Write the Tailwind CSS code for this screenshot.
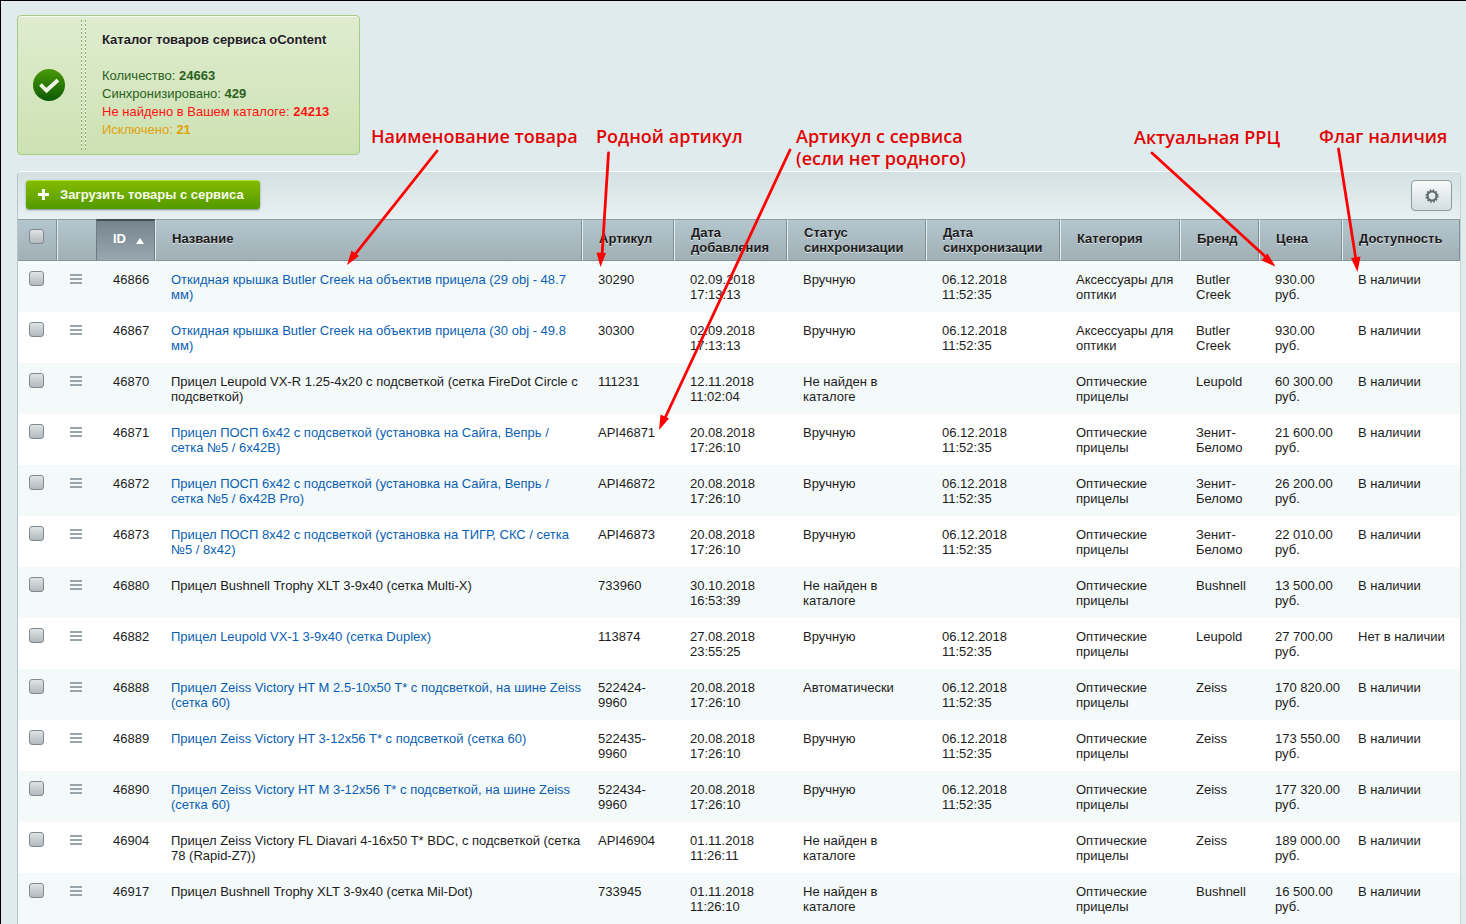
<!DOCTYPE html>
<html lang="ru">
<head>
<meta charset="utf-8">
<title>Каталог товаров сервиса oContent</title>
<script src="https://cdn.jsdelivr.net/npm/@tailwindcss/browser@4"></script>
</head>
<body class="relative min-h-screen overflow-x-hidden border-t border-l border-black bg-[#e0ebed] pt-[14px] pr-[5px] pl-4 font-['Liberation_Sans',Arial,sans-serif] text-[13px] leading-[15px] text-[#1c1c1c]">

<section class="flex w-fit rounded-[4px] border border-[#a5cb84] bg-linear-to-b from-[#dfecd0] to-[#cde2b2] shadow-[inset_0_1px_0_#f7fbf0]">
  <div class="flex w-[63px] items-center justify-center pr-[2px]">
    <svg class="size-8" viewBox="0 0 32 32" aria-hidden="true">
      <defs><linearGradient id="ok" x1="0" y1="0" x2="0" y2="1"><stop offset="0" stop-color="#4a9a06"/><stop offset="1" stop-color="#0c5a05"/></linearGradient></defs>
      <circle cx="16" cy="16" r="16" fill="url(#ok)"/>
      <path d="M7.500 15.500l6 6L25 11" fill="none" stroke="#f0f7e8" stroke-width="3.800"/>
    </svg>
  </div>
  <div class="my-1 flex w-[5px] justify-between">
    <span class="w-px bg-[repeating-linear-gradient(to_bottom,#8fb077_0_2px,#f0f7e6_2px_4px)]"></span>
    <span class="w-px bg-[repeating-linear-gradient(to_bottom,#8fb077_0_2px,#f0f7e6_2px_4px)]"></span>
  </div>
  <div class="py-[15px] pr-[30px] pl-4 leading-[18px] text-[#2a6120]">
    <h1 class="mb-[18px] font-bold text-[#1c1c1c] [text-shadow:0_1px_0_#ffffffb0]">Каталог товаров сервиса oContent</h1>
    <p>Количество: <b>24663</b></p>
    <p>Синхронизировано: <b>429</b></p>
    <p class="text-[#ff1212]">Не найдено в Вашем каталоге: <b>24213</b></p>
    <p class="text-[#e0a10c]">Исключено: <b>21</b></p>
  </div>
</section>

<main class="mt-4 rounded-t-[5px] border-x border-t border-l-[#b9c6c9] border-r-[#c5d0d3] border-t-white">
  <div class="flex h-[47px] items-start justify-between rounded-t-[4px] bg-linear-to-b from-[#d4e1e2] to-[#e8f0f2] px-2 pt-2">
    <button type="button" class="flex h-[29px] items-center gap-[11px] rounded-[3px] border-t border-t-[#b2de3c] bg-linear-to-b from-[#84bb00] to-[#519a00] pr-4 pb-[2px] pl-3 font-bold text-[#f7fbea] shadow-[0_1px_2px_#00000070]">
      <svg class="size-[11px]" viewBox="0 0 11 11" aria-hidden="true"><path d="M5.500 0v11M0 5.500h11" stroke="#fff" stroke-width="3"/></svg>
      Загрузить товары с сервиса
    </button>
    <button type="button" aria-label="Настройки" class="flex h-[31px] w-[41px] items-center justify-center rounded-[4px] border border-[#8a9a9e] bg-linear-to-b from-[#f9fbfb] to-[#d3dde0]">
      <svg class="size-[14px]" viewBox="0 0 14 14" aria-hidden="true" fill="none" stroke="#5d6b71"><circle cx="7" cy="7" r="4.500" stroke-width="2.200"/><circle cx="7" cy="7" r="6" stroke-width="1.400" stroke-dasharray="1.650 1.492"/></svg>
    </button>
  </div>

  <table class="w-full table-fixed border-separate border-spacing-0 text-left">
    <colgroup>
      <col class="w-[39px]"><col class="w-[39px]"><col class="w-[59px]"><col><col class="w-[92px]"><col class="w-[113px]"><col class="w-[139px]"><col class="w-[134px]"><col class="w-[120px]"><col class="w-[79px]"><col class="w-[83px]"><col class="w-[118px]">
    </colgroup>
    <thead>
      <tr id="head" class="h-[42px] bg-linear-to-b from-[#b4c7ce] to-[#a0b0b4]"></tr>
    </thead>
    <tbody id="rows"></tbody>
  </table>
</main>

<div class="pointer-events-none absolute inset-0 font-['Open_Sans',sans-serif] text-[18px] leading-[22px] font-semibold whitespace-nowrap text-[#e00505]">
  <svg class="absolute top-0 left-0 h-[440px] w-[1465px]" viewBox="1 1 1465 440" aria-hidden="true" stroke="#f00" fill="#f00">
    <g stroke-width="2.800" stroke-linecap="round">
      <path d="M437 151L353 257M608.500 153L602 256M790 150L665 418M1152 153L1268 259M1338.500 149L1356 260"/>
    </g>
    <g stroke="none">
      <path d="M347 265l4.500-14.500 7.500 5.500z"/>
      <path d="M600.500 267l-4-14.500 9.500.500z"/>
      <path d="M659 430l1.500-15.500 8.500 4z"/>
      <path d="M1275.500 266.500l-14-6 6-7z"/>
      <path d="M1357.500 272l-6.500-14 9.500-1.500z"/>
    </g>
  </svg>
  <span class="absolute top-[124px] left-[370px]">Наименование товара</span>
  <span class="absolute top-[124px] left-[595px]">Родной артикул</span>
  <span class="absolute top-[124px] left-[795px]">Артикул с сервиса<br>(если нет родного)</span>
  <span class="absolute top-[125px] left-[1133px]">Актуальная РРЦ</span>
  <span class="absolute top-[124px] left-[1318px]">Флаг наличия</span>
</div>

<script>
const box = label => `<input type="checkbox" aria-label="${label}" class="block size-[15px] appearance-none rounded-[3px] border border-[#7f8a8e] bg-linear-to-b from-[#dfe3e5] to-[#b3babd] checked:from-[#8fa3aa]">`;
const heads = ['Название', 'Артикул', 'Дата<br>добавления', 'Статус<br>синхронизации', 'Дата<br>синхронизации', 'Категория', 'Бренд', 'Цена', 'Доступность'];
const th = 'border-t border-b border-r border-l border-t-[#8b9ca2] border-b-[#82959a] border-r-[#7f9197] border-l-[#e3edef] pl-4 font-bold [text-shadow:0_1px_0_#ffffffa0]';
document.getElementById('head').innerHTML =
  `<th class="border-t border-b border-r border-t-[#8b9ca2] border-b-[#82959a] border-r-[#7f9197] pb-2 pl-[11px]">${box('Выбрать все')}</th>
   <th aria-label="Действия" class="border-t border-b border-l border-t-[#8b9ca2] border-b-[#82959a] border-l-[#e3edef]"></th>
   <th aria-sort="ascending" class="border-t-2 border-b border-x border-t-[#434c58] border-b-[#82959a] border-x-[#6d7c83] bg-linear-to-b from-[#76858d] to-[#98a8ae] pb-1 pl-4 font-bold text-white">
     <span class="flex items-center gap-[10px]">ID<svg class="mt-1 h-[6px] w-2" viewBox="0 0 8 6" aria-hidden="true"><path d="M4 0l4 6H0z" fill="#fff"/></svg></span></th>` +
  heads.map(h => `<th class="${th} ${h.includes('<br>') ? '' : 'pb-[3px]'}">${h}</th>`).join('');

const M = 'Вручную', N = 'Не найден в каталоге', O = 'Оптические прицелы', A = 'Аксессуары для оптики', S = '06.12.2018 11:52:35', Y = 'В наличии', D = '20.08.2018 17:26:10';
const items = [
  [46866, 'Откидная крышка Butler Creek на объектив прицела (29 obj - 48.7 мм)', '30290', '02.09.2018 17:13:13', M, S, A, 'Butler Creek', '930.00', Y],
  [46867, 'Откидная крышка Butler Creek на объектив прицела (30 obj - 49.8 мм)', '30300', '02.09.2018 17:13:13', M, S, A, 'Butler Creek', '930.00', Y],
  [46870, 'Прицел Leupold VX-R 1.25-4x20 с подсветкой (сетка FireDot Circle с подсветкой)', '111231', '12.11.2018 11:02:04', N, '', O, 'Leupold', '60 300.00', Y],
  [46871, 'Прицел ПОСП 6x42 с подсветкой (установка на Сайга, Вепрь / сетка №5 / 6x42B)', 'API46871', D, M, S, O, 'Зенит-Беломо', '21 600.00', Y],
  [46872, 'Прицел ПОСП 6x42 с подсветкой (установка на Сайга, Вепрь / сетка №5 / 6x42B Pro)', 'API46872', D, M, S, O, 'Зенит-Беломо', '26 200.00', Y],
  [46873, 'Прицел ПОСП 8x42 с подсветкой (установка на ТИГР, СКС / сетка №5 / 8x42)', 'API46873', D, M, S, O, 'Зенит-Беломо', '22 010.00', Y],
  [46880, 'Прицел Bushnell Trophy XLT 3-9x40 (сетка Multi-X)', '733960', '30.10.2018 16:53:39', N, '', O, 'Bushnell', '13 500.00', Y],
  [46882, 'Прицел Leupold VX-1 3-9x40 (сетка Duplex)', '113874', '27.08.2018 23:55:25', M, S, O, 'Leupold', '27 700.00', 'Нет в наличии'],
  [46888, 'Прицел Zeiss Victory HT M 2.5-10x50 T* с подсветкой, на шине Zeiss (сетка 60)', '522424-9960', D, 'Автоматически', S, O, 'Zeiss', '170 820.00', Y],
  [46889, 'Прицел Zeiss Victory HT 3-12x56 T* с подсветкой (сетка 60)', '522435-9960', D, M, S, O, 'Zeiss', '173 550.00', Y],
  [46890, 'Прицел Zeiss Victory HT M 3-12x56 T* с подсветкой, на шине Zeiss (сетка 60)', '522434-9960', D, M, S, O, 'Zeiss', '177 320.00', Y],
  [46904, 'Прицел Zeiss Victory FL Diavari 4-16x50 T* BDC, с подсветкой (сетка 78 (Rapid-Z7))', 'API46904', '01.11.2018 11:26:11', N, '', O, 'Zeiss', '189 000.00', Y],
  [46917, 'Прицел Bushnell Trophy XLT 3-9x40 (сетка Mil-Dot)', '733945', '01.11.2018 11:26:10', N, '', O, 'Bushnell', '16 500.00', Y]
];
const td = 'pl-4 pt-[11px] pb-[10px]';
document.getElementById('rows').innerHTML = items.map(([id, name, art, added, status, sync, cat, brand, price, stock]) =>
  `<tr class="h-[51px] bg-white align-top odd:bg-[#f4f9f9]">
    <td class="pt-[10px] pl-[11px]">${box('Выбрать ' + id)}</td>
    <td class="pt-3 pl-[13px]"><button type="button" aria-label="Действия ${id}" class="block"><svg class="h-3 w-3" viewBox="0 0 12 12" aria-hidden="true"><path d="M0 2h12M0 6h12M0 10h12" stroke="#98a5aa" stroke-width="2"/></svg></button></td>
    <td class="pt-[11px] pb-[10px] pl-[17px]">${id}</td>
    <td class="${td}">${status === N ? name : `<a href="#${id}" class="text-[#0b5fb3]">${name}</a>`}</td>
    <td class="${td}">${art}</td>
    <td class="${td} pr-4">${added}</td>
    <td class="${td} pr-4">${status}</td>
    <td class="${td} pr-4">${sync}</td>
    <td class="${td}">${cat}</td>
    <td class="${td}">${brand}</td>
    <td class="${td}">${price.replace(' ', '&nbsp;')} руб.</td>
    <td class="${td}">${stock}</td>
  </tr>`).join('');
</script>
</body>
</html>
